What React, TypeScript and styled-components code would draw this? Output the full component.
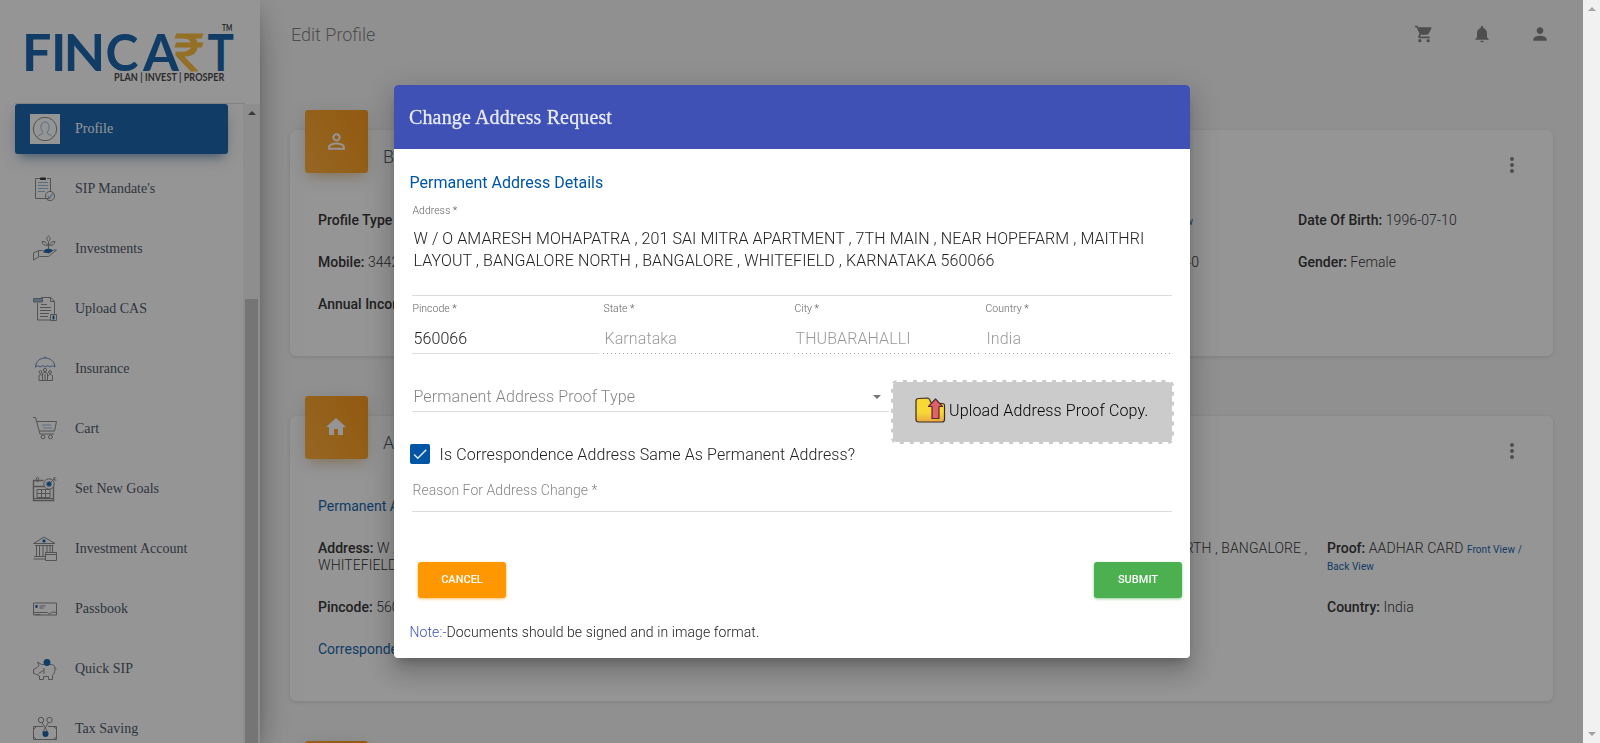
import React from "react";
import styled, { createGlobalStyle, css } from "styled-components";
import {
  MdCheck,
  MdHome,
  MdMoreVert,
  MdNotifications,
  MdPerson,
  MdPersonOutline,
  MdShoppingCart,
} from "react-icons/md";

const BLUE = "#0055a5";
const INK = "#212121";

const GlobalStyle = createGlobalStyle`
  *, *::before, *::after { box-sizing: border-box; }
  html, body, #root { height: 100%; margin: 0; }
  body { overflow: hidden; font-family: Roboto, "Liberation Sans", sans-serif; font-weight: 300; letter-spacing: 0.09px; color: ${INK}; }
  svg { display: block; }
`;

const Window = styled.div`
  display: flex;
  width: 1600px;
  height: 743px;
  overflow: hidden;
`;

const Page = styled.div`
  display: flex;
  flex: 1;
  min-width: 0;
  background: #f6f6f6;
`;

/* ---------- scroll bars ---------- */

const PageScroll = styled.div`
  display: flex;
  flex-direction: column;
  justify-content: space-between;
  align-items: center;
  width: 17px;
  padding: 7px 0;
  background: #f1f1f1;
  position: relative;
  z-index: 3;
`;

const Triangle = styled.i<{ $down?: boolean; $color: string }>`
  width: 0;
  height: 0;
  border-left: 4px solid transparent;
  border-right: 4px solid transparent;
  ${({ $down, $color }) =>
    $down ? css`border-top: 4px solid ${$color};` : css`border-bottom: 4px solid ${$color};`}
`;

const SideScroll = styled.div`
  display: flex;
  flex-direction: column;
  align-items: center;
  width: 17px;
  padding-top: 7px;
  background: #f1f1f1;
`;

const Thumb = styled.div`
  width: 13px;
  flex: 1;
  margin-top: 184px;
  background: #c1c1c1;
`;

/* ---------- side bar ---------- */

const Sidebar = styled.aside`
  position: relative;
  z-index: 1;
  display: flex;
  flex-direction: column;
  width: 260px;
  background: #fff;
  box-shadow: 0 16px 38px -12px rgba(0, 0, 0, 0.56), 0 4px 25px 0 rgba(0, 0, 0, 0.12),
    0 8px 10px -5px rgba(0, 0, 0, 0.2);
`;

const Brand = styled.div`
  height: 104px;
  margin: 0 15px;
  border-bottom: 1px solid #dcdcdc;
`;

const SideBody = styled.div`
  display: flex;
  flex: 1;
  min-height: 0;
`;

const Menu = styled.nav`
  display: flex;
  flex: 1;
  flex-direction: column;
  gap: 10px;
  padding-left: 15px;
  overflow: hidden;
`;

const MenuItem = styled.a<{ $active?: boolean }>`
  display: flex;
  flex: none;
  align-items: center;
  gap: 15px;
  width: 213px;
  height: 50px;
  padding: 0 15px;
  border-radius: 3px;
  font: 400 14px/20px "Liberation Serif", serif;
  letter-spacing: 0;
  white-space: nowrap;
  color: #3c4858;
  ${({ $active }) =>
    $active &&
    css`
      color: #fff;
      background: ${BLUE};
      box-shadow: 0 4px 20px 0 rgba(0, 0, 0, 0.14), 0 7px 10px -5px rgba(0, 85, 165, 0.6);
    `}
`;

const MenuIcon = styled.svg<{ $filled?: boolean }>`
  flex: none;
  width: 30px;
  height: 30px;
  fill: none;
  stroke: #808080;
  stroke-width: 1;
  ${({ $filled }) => $filled && css`background: #fff;`}
`;

/* ---------- main area ---------- */

const Main = styled.main`
  display: flex;
  flex: 1;
  flex-direction: column;
  min-width: 0;
`;

const Topbar = styled.header`
  display: flex;
  flex: none;
  align-items: center;
  justify-content: space-between;
  height: 70px;
  padding: 0 33px 2px 31px;
`;

const PageTitle = styled.h1`
  margin: 0;
  font-size: 18px;
  font-weight: 300;
  letter-spacing: 0;
  color: #777;
`;

const TopIcons = styled.div`
  display: flex;
  gap: 38px;
  color: #777;
`;

const Cards = styled.div`
  display: flex;
  flex-direction: column;
  gap: 60px;
  padding: 60px 30px 0;
`;

const Card = styled.section<{ $height: number }>`
  flex: none;
  height: ${({ $height }) => $height}px;
  background: #fff;
  border-radius: 6px;
  box-shadow: 0 1px 4px 0 rgba(0, 0, 0, 0.14);
`;

const CardHead = styled.div`
  display: flex;
  align-items: flex-start;
  height: 43px;
  padding: 0 29px 0 15px;
`;

const CardIcon = styled.div`
  display: flex;
  align-items: center;
  justify-content: center;
  width: 63px;
  height: 63px;
  margin-top: -20px;
  padding-right: 1px;
  padding-bottom: 1px;
  border-radius: 3px;
  color: #fff;
  background: linear-gradient(60deg, #ffa726, #fb8c00);
  box-shadow: 0 4px 20px 0 rgba(0, 0, 0, 0.14), 0 7px 10px -5px rgba(255, 152, 0, 0.4);
`;

const CardTitle = styled.h2`
  flex: 1;
  margin: 15px 0 0 15px;
  font-size: 18px;
  line-height: 24px;
  font-weight: 300;
  color: #3c4858;
`;

const MoreButton = styled.span`
  margin-top: 23px;
  color: #777;
`;

const Facts = styled.div<{ $columns: string }>`
  display: grid;
  grid-template-columns: ${({ $columns }) => $columns};
  row-gap: 25px;
  padding: 39px 28px 0;
  font-size: 14px;
  line-height: 17px;
`;

const Fact = styled.div<{ $wide?: boolean; $inset?: number }>`
  white-space: pre-line;
  ${({ $wide }) => $wide && css`grid-column: 1 / -1;`}
  ${({ $inset }) => $inset !== undefined && css`text-align: right; padding-right: ${$inset}px;`}
  b { font-weight: 500; letter-spacing: 0; }
`;

const SectionLink = styled.a`
  grid-column: 1 / -1;
  font-weight: 400;
  letter-spacing: 0;
  color: ${BLUE};
`;

const SmallLink = styled.a`
  font-size: 10px;
  line-height: 1;
  font-weight: 400;
  color: ${BLUE};
`;

/* ---------- dialog ---------- */

const Backdrop = styled.div`
  position: fixed;
  inset: 0 17px 0 0;
  z-index: 2;
  display: flex;
  justify-content: center;
  align-items: flex-start;
  padding-top: 85px;
  background: rgba(33, 33, 33, 0.48);
`;

const Dialog = styled.div`
  display: flex;
  flex-direction: column;
  width: 796px;
  height: 573px;
  margin-left: 1px;
  overflow: hidden;
  background: #fff;
  border-radius: 4px;
  box-shadow: 0 8px 9px -5px rgba(0, 0, 0, 0.2), 0 15px 22px 2px rgba(0, 0, 0, 0.14),
    0 6px 28px 5px rgba(0, 0, 0, 0.12);
`;

const DialogHead = styled.div`
  display: flex;
  flex: none;
  align-items: center;
  height: 64px;
  padding-left: 15px;
  font: 400 20px "Liberation Serif", serif;
  letter-spacing: 0.14px;
  color: rgba(255, 255, 255, 0.87);
  -webkit-text-stroke: 0.4px rgba(255, 255, 255, 0.6);
  background: #3f51b5;
`;

const DialogBody = styled.div`
  display: flex;
  flex: 1;
  flex-direction: column;
  padding: 24px 16px 0;
`;

const Legend = styled.h3`
  margin: 0 0 0 -0.5px;
  font-size: 16px;
  line-height: 20px;
  font-weight: 400;
  letter-spacing: 0;
  color: ${BLUE};
`;

const Field = styled.div<{ $height: number; $dotted?: boolean }>`
  display: flex;
  flex: 1;
  flex-direction: column;
  height: ${({ $height }) => $height}px;
  padding-left: 0.5px;
  border-bottom: 1px solid #dcdcdc;
  ${({ $dotted }) =>
    $dotted &&
    css`
      border-bottom: 0;
      background: linear-gradient(to right, rgba(0, 0, 0, 0.38) 0, rgba(0, 0, 0, 0.38) 33%, transparent 33%)
        0 100% / 4px 1px repeat-x;
      color: rgba(0, 0, 0, 0.42);
    `}
`;

const FieldLabel = styled.label`
  font-size: 10.5px;
  line-height: 14px;
  letter-spacing: 0;
  color: rgba(0, 0, 0, 0.65);
`;

const FieldValue = styled.div<{ $gap: number }>`
  margin-top: ${({ $gap }) => $gap}px;
  padding-left: 1px;
  font-size: 16px;
  line-height: 22px;
  white-space: pre-line;
`;

const AddressRow = styled.div`
  display: flex;
  margin: 11px 2px 0;
`;

const FieldRow = styled.div`
  display: flex;
  gap: 4px;
  margin: 6px 2px 0;
`;

const ProofRow = styled.div`
  display: flex;
  align-items: flex-start;
  gap: 2px;
  margin: 26px 0 0 2px;
`;

const Select = styled.div`
  display: flex;
  align-items: center;
  justify-content: space-between;
  width: 477px;
  height: 32px;
  padding: 2px 8px 0 1.5px;
  font-size: 16px;
  letter-spacing: 0.12px;
  color: rgba(0, 0, 0, 0.5);
  border-bottom: 1px solid #dcdcdc;
`;

const Upload = styled.button`
  display: flex;
  align-items: center;
  gap: 3px;
  width: 283px;
  height: 64px;
  padding: 0 0 3px 22px;
  font: 300 16px Roboto, sans-serif;
  letter-spacing: 0.14px;
  color: #000;
  background: #cbcbcb;
  border: 2px dashed #fff;
  outline: 0;
  border-radius: 6px;
`;

const CheckRow = styled.label`
  display: flex;
  align-items: center;
  gap: 9.5px;
  height: 20px;
  font-size: 16px;
  letter-spacing: 0.12px;
`;

const CheckBox = styled.span`
  display: flex;
  align-items: center;
  justify-content: center;
  width: 20px;
  height: 20px;
  color: rgba(255, 255, 255, 0.87);
  background: ${BLUE};
  border-radius: 2px;
`;

const Reason = styled.div`
  height: 36px;
  margin: 12px 2px 0;
  padding: 5px 0 0 0.5px;
  font-size: 14px;
  line-height: 18px;
  letter-spacing: 0.06px;
  color: rgba(0, 0, 0, 0.5);
  border-bottom: 1px solid #dcdcdc;
`;

const Actions = styled.div`
  display: flex;
  justify-content: space-between;
  margin: 50px -8px 0 8px;
`;

const Button = styled.button<{ $tone: string }>`
  width: 88px;
  height: 36px;
  padding: 0 0 2px;
  font: 500 11px Roboto, sans-serif;
  color: #fff;
  background: ${({ $tone }) => $tone};
  border: 0;
  border-radius: 3px;
  box-shadow: 0 1px 3px 0 ${({ $tone }) => $tone}99;
`;

const Note = styled.p`
  margin: 25px 0 0 -0.5px;
  font-size: 14px;
  line-height: 18px;
  span { color: #3f51b5; }
`;

/* ---------- drawings ---------- */

const Logo = () => (
  <svg width="230" height="103" viewBox="15 0 230 103" fontFamily="Lato, sans-serif">
    <g fill={BLUE} fontSize="52" fontWeight="700">
      <text x="22" y="70.5">F</text>
      <text x="51" y="70.5">I</text>
      <text x="63.5" y="70.5" textLength="42" lengthAdjust="spacingAndGlyphs">N</text>
      <text x="105.5" y="70.5" textLength="33" lengthAdjust="spacingAndGlyphs">C</text>
      <text x="143" y="70.5" textLength="36" lengthAdjust="spacingAndGlyphs">A</text>
      <text x="207.5" y="70.5" textLength="26.5" lengthAdjust="spacingAndGlyphs">T</text>
    </g>
    <text x="174" y="70.5" fill="#fbb829" stroke="#fbb829" strokeWidth="0.9" fontSize="52" fontWeight="400" fontFamily="Roboto, sans-serif" textLength="30" lengthAdjust="spacingAndGlyphs">₹</text>
    <text x="114" y="81" fill="#333" fontSize="10.5" fontWeight="700" textLength="110.5" lengthAdjust="spacingAndGlyphs">PLAN | INVEST | PROSPER</text>
    <text x="222" y="30.5" fill="#333" fontSize="9" fontWeight="700" textLength="10.5" lengthAdjust="spacingAndGlyphs">TM</text>
  </svg>
);

const LIGHT = "#8fb3dc";

const ICONS: Record<string, React.ReactNode> = {
  profile: (
    <>
      <circle cx="15" cy="15" r="11.7" />
      <path stroke={LIGHT} d="M7.5 24c0-2.5 2-3 4.500-4 1-.5.8-2 0-3-2-3-1.500-9 3-9s5 6 3 9c-.8 1-1 2.500 0 3 2.500 1 4.500 1.500 4.500 4" />
    </>
  ),
  mandate: (
    <>
      <path d="M10 4.500H5.500v20H20M17 4.500h3.500V17" />
      <path fill="#222" stroke="#222" d="M10.500 4h5v1.500h-5z" />
      <path stroke={LIGHT} d="M8 8.500h10M8 11.500h10M8 14.500h10M8 17.500h7" />
      <circle cx="20" cy="22" r="4.600" />
      <path stroke={LIGHT} strokeWidth="1.300" d="M17.500 22l2 2 3.500-4.500" />
    </>
  ),
  invest: (
    <>
      <path d="M18.500 16V8M18.500 7.500c-2.500-2-2-4 0-5.500 2 1.500 2.500 3.500 0 5.500zM17.500 11.500c-3 0-5-1-5.500-4 3 0 5 1 5.500 4zM19.500 11.500c3 0 5-1 5.500-4-3 0-5 1-5.500 4z" />
      <path d="M3.500 26v-7l5-2.500h4l4 2.500M3.500 26l6-3.500h9l8-6.500c-2-.5-4 .5-7 2.500h-6M8.500 17v5.500" />
      <path fill={BLUE} stroke={BLUE} d="M14 17c2-2.500 7-2 8.500-.5L18.500 19z" />
    </>
  ),
  cas: (
    <>
      <path d="M7.500 9v17H21M11 3.500h10l3.500 4V20M20.500 3.500v4h4" />
      <path fill={LIGHT} d="M3.500 4.500h9v3.500h-9z" />
      <path d="M11 10.500h6M10 13.500h11M10 16.500h11M10 19.500h9M10 22.500h8" />
      <path fill="#fff" d="M20.500 20.500h6v6h-6z" />
      <path stroke={BLUE} strokeWidth="2" d="M23.500 21.500v4" />
    </>
  ),
  insurance: (
    <>
      <path stroke="#4f7fb8" d="M5.500 13C6 7 10 4 15 4s9.500 3 10 9c-2-1.500-3.500-1.500-5 0-2-1.500-3.500-1.500-5 0-1.500-1.500-3-1.500-5 0-1.500-1.500-3-1.500-5 0zM15 4V2.500" />
      <circle cx="15" cy="16" r="1.600" />
      <circle cx="10.500" cy="18" r="1.400" />
      <circle cx="20" cy="18" r="1.400" />
      <path d="M12.500 26.500V20c0-2 5-2 5 0v6.500M9 26.500V22c0-2 3-2 3 0M21.500 26.500h1V22c0-2-4-2-4 0M9 26.500h13M15 20v6" />
    </>
  ),
  cart: (
    <>
      <path d="M3 3.500h2.500L10 20h14M6.500 7.500h20l-2 9.500H9.500" />
      <path stroke={LIGHT} d="M12 11h9M13 14h9" />
      <circle cx="13" cy="23" r="1.900" />
      <circle cx="20.500" cy="23" r="1.900" />
    </>
  ),
  goals: (
    <>
      <path strokeWidth="1.400" d="M13.500 6.500H3.500v20h20V13M3.500 12.500H14" />
      <path d="M7.500 3c1.500 0 1.500 5 0 5s-1.500-5 0-5z" />
      <path d="M7 15.500h13M7 19.500h13M7 23.500h13M7 15.500v8M11.500 15.500v8M15.500 15.500v8M20 15.500v8M4 24.500h19" />
      <circle cx="19" cy="10" r="5.200" />
      <circle cx="19" cy="10" r="2.600" fill={BLUE} stroke={LIGHT} />
      <path d="M20.500 8.500l5-5M24 3v3h2.500" />
    </>
  ),
  account: (
    <>
      <path d="M3.500 9.500L14 3l11 6.500zM5 11.500h18.500M6.500 12v10M9.500 12v10M13 12v10M17 12v7M20 12v7M22.500 12v7M4 22.500h11M3.500 25h11.500" />
      <circle cx="14" cy="7" r="1.700" fill={BLUE} stroke={LIGHT} />
      <path fill="#fff" d="M15.500 18.500h11v8h-11zM15.500 20.500h11" />
    </>
  ),
  passbook: (
    <>
      <path d="M3.500 9h23v12h-23zM3.500 18.500h14l2 1.500 3-2 4 .5M5.500 20.500h5M9.500 12h6M9.500 14h4" />
      <circle cx="6.500" cy="12.500" r="1.400" fill={BLUE} stroke="none" />
    </>
  ),
  sip: (
    <>
      <path d="M9 11.500L7.500 8l4 2.500h10c3 0 3.500 3 3.500 5 0 3-1.500 5-2.500 6v4h-4v-3h-5v3h-4V22c-2-1-3.500-2-6-2.500v-4l3-1.500zM25 14l1.500 1M8.500 19.500l5-3M14 14v6" />
      <circle cx="17" cy="8.500" r="3.400" fill={BLUE} stroke="none" />
    </>
  ),
  tax: (
    <>
      <circle cx="11" cy="6" r="2.700" />
      <circle cx="19.500" cy="6" r="2.700" />
      <path d="M12 8.500l6 10M18.500 8.500l-6 10M13 12.500H3.500v13h23v-13H18M6 13l-2 2M24 13l2.500 2M6 25l-2-2M24 25l2.500-2" />
      <circle cx="15.500" cy="20" r="3" fill={BLUE} stroke="none" />
    </>
  ),
};

const UploadFolder = () => (
  <svg width="31" height="28" viewBox="0 0 31 28">
    <defs>
      <linearGradient id="folder" x1="0" y1="0" x2="0" y2="1">
        <stop offset="0.6" stopColor="#f6d934" />
        <stop offset="1" stopColor="#eba745" />
      </linearGradient>
    </defs>
    <path
      fill="url(#folder)"
      stroke="#3a2c20"
      strokeWidth="1.200"
      strokeLinejoin="round"
      d="M1 4q0-2.500 2.500-2.500l9-.5q1.500 0 2 1.500l2 4h11q2 0 2 2v14q0 2.500-2.500 2.500H3.500Q1 25 1 22.500z"
    />
    <path
      fill="#e0606c"
      stroke="#5a2830"
      strokeWidth="1.200"
      strokeLinejoin="round"
      d="M20.500 2l7 7.500h-3.500v12h-7v-12h-3.500z"
    />
  </svg>
);

const MENU = [
  { icon: "profile", label: "Profile" },
  { icon: "mandate", label: "SIP Mandate's" },
  { icon: "invest", label: "Investments" },
  { icon: "cas", label: "Upload CAS" },
  { icon: "insurance", label: "Insurance" },
  { icon: "cart", label: "Cart" },
  { icon: "goals", label: "Set New Goals" },
  { icon: "account", label: "Investment Account" },
  { icon: "passbook", label: "Passbook" },
  { icon: "sip", label: "Quick SIP" },
  { icon: "tax", label: "Tax Saving" },
];

const LOCKED_FIELDS = [
  { label: "State *", value: "Karnataka" },
  { label: "City *", value: "THUBARAHALLI" },
  { label: "Country *", value: "India" },
];

const ADDRESS_START =
  "W / O AMARESH MOHAPATRA , 201 SAI MITRA APARTMENT , 7TH MAIN , NEAR HOPEFARM , MAITHRI";

export default function App() {
  return (
    <Window>
      <GlobalStyle />
      <Page>
        <Sidebar>
          <Brand>
            <Logo />
          </Brand>
          <SideBody>
            <Menu>
              {MENU.map(({ icon, label }, i) => (
                <MenuItem key={icon} $active={i === 0}>
                  <MenuIcon viewBox="0 0 30 30" $filled={i === 0}>
                    {ICONS[icon]}
                  </MenuIcon>
                  {label}
                </MenuItem>
              ))}
            </Menu>
            <SideScroll>
              <Triangle $color="#505050" />
              <Thumb />
            </SideScroll>
          </SideBody>
        </Sidebar>

        <Main>
          <Topbar>
            <PageTitle>Edit Profile</PageTitle>
            <TopIcons>
              <MdShoppingCart size={20} />
              <MdNotifications size={20} />
              <MdPerson size={20} />
            </TopIcons>
          </Topbar>
          <Cards>
            <Card $height={226}>
              <CardHead>
                <CardIcon>
                  <MdPersonOutline size={25} />
                </CardIcon>
                <CardTitle>Basic Details</CardTitle>
                <MoreButton>
                  <MdMoreVert size={24} />
                </MoreButton>
              </CardHead>
              <Facts $columns="490px 490px 1fr">
                <Fact><b>Profile Type :</b> Individual</Fact>
                <Fact $inset={105}><b>PAN:</b> <SmallLink>View</SmallLink></Fact>
                <Fact><b>Date Of Birth:</b> 1996-07-10</Fact>
                <Fact><b>Mobile:</b> 3442</Fact>
                <Fact $inset={99}><b>Aadhaar:</b> 40</Fact>
                <Fact><b>Gender:</b> Female</Fact>
                <Fact $wide><b>Annual Income:</b></Fact>
              </Facts>
            </Card>
            <Card $height={285}>
              <CardHead>
                <CardIcon>
                  <MdHome size={24} />
                </CardIcon>
                <CardTitle>Address</CardTitle>
                <MoreButton>
                  <MdMoreVert size={24} />
                </MoreButton>
              </CardHead>
              <Facts $columns="1009px 1fr">
                <SectionLink>Permanent Address</SectionLink>
                <Fact>
                  <b>Address:</b> {ADDRESS_START} LAYOUT , BANGALORE NORTH , BANGALORE ,{"\n"}WHITEFIELD , KARNATAKA 560066
                </Fact>
                <Fact>
                  <b>Proof:</b> AADHAR CARD <SmallLink>Front View /{"\n"}Back View</SmallLink>
                </Fact>
                <Fact><b>Pincode:</b> 560066</Fact>
                <Fact><b>Country:</b> India</Fact>
                <SectionLink>Correspondence Address</SectionLink>
              </Facts>
            </Card>
            <Card $height={226}>
              <CardHead>
                <CardIcon />
              </CardHead>
            </Card>
          </Cards>
        </Main>
      </Page>

      <PageScroll>
        <Triangle $color="#a3a3a3" />
        <Triangle $color="#a3a3a3" $down />
      </PageScroll>

      <Backdrop>
        <Dialog role="dialog">
          <DialogHead>Change Address Request</DialogHead>
          <DialogBody>
            <Legend>Permanent Address Details</Legend>
            <AddressRow>
              <Field $height={92}>
                <FieldLabel>Address *</FieldLabel>
                <FieldValue $gap={10}>
                  {ADDRESS_START}{"\n"}LAYOUT , BANGALORE NORTH , BANGALORE , WHITEFIELD , KARNATAKA 560066
                </FieldValue>
              </Field>
            </AddressRow>
            <FieldRow>
              <Field $height={52}>
                <FieldLabel>Pincode *</FieldLabel>
                <FieldValue $gap={12}>560066</FieldValue>
              </Field>
              {LOCKED_FIELDS.map(({ label, value }) => (
                <Field key={label} $height={52} $dotted>
                  <FieldLabel>{label}</FieldLabel>
                  <FieldValue $gap={12}>{value}</FieldValue>
                </Field>
              ))}
            </FieldRow>
            <ProofRow>
              <Select>
                Permanent Address Proof Type
                <Triangle $color="#757575" $down />
              </Select>
              <Upload>
                <UploadFolder />
                Upload Address Proof Copy.
              </Upload>
            </ProofRow>
            <CheckRow>
              <CheckBox>
                <MdCheck size={18} />
              </CheckBox>
              Is Correspondence Address Same As Permanent Address?
            </CheckRow>
            <Reason>Reason For Address Change *</Reason>
            <Actions>
              <Button $tone="#ff9800">CANCEL</Button>
              <Button $tone="#4caf50">SUBMIT</Button>
            </Actions>
            <Note>
              <span>Note:-</span>Documents should be signed and in image format.
            </Note>
          </DialogBody>
        </Dialog>
      </Backdrop>
    </Window>
  );
}
